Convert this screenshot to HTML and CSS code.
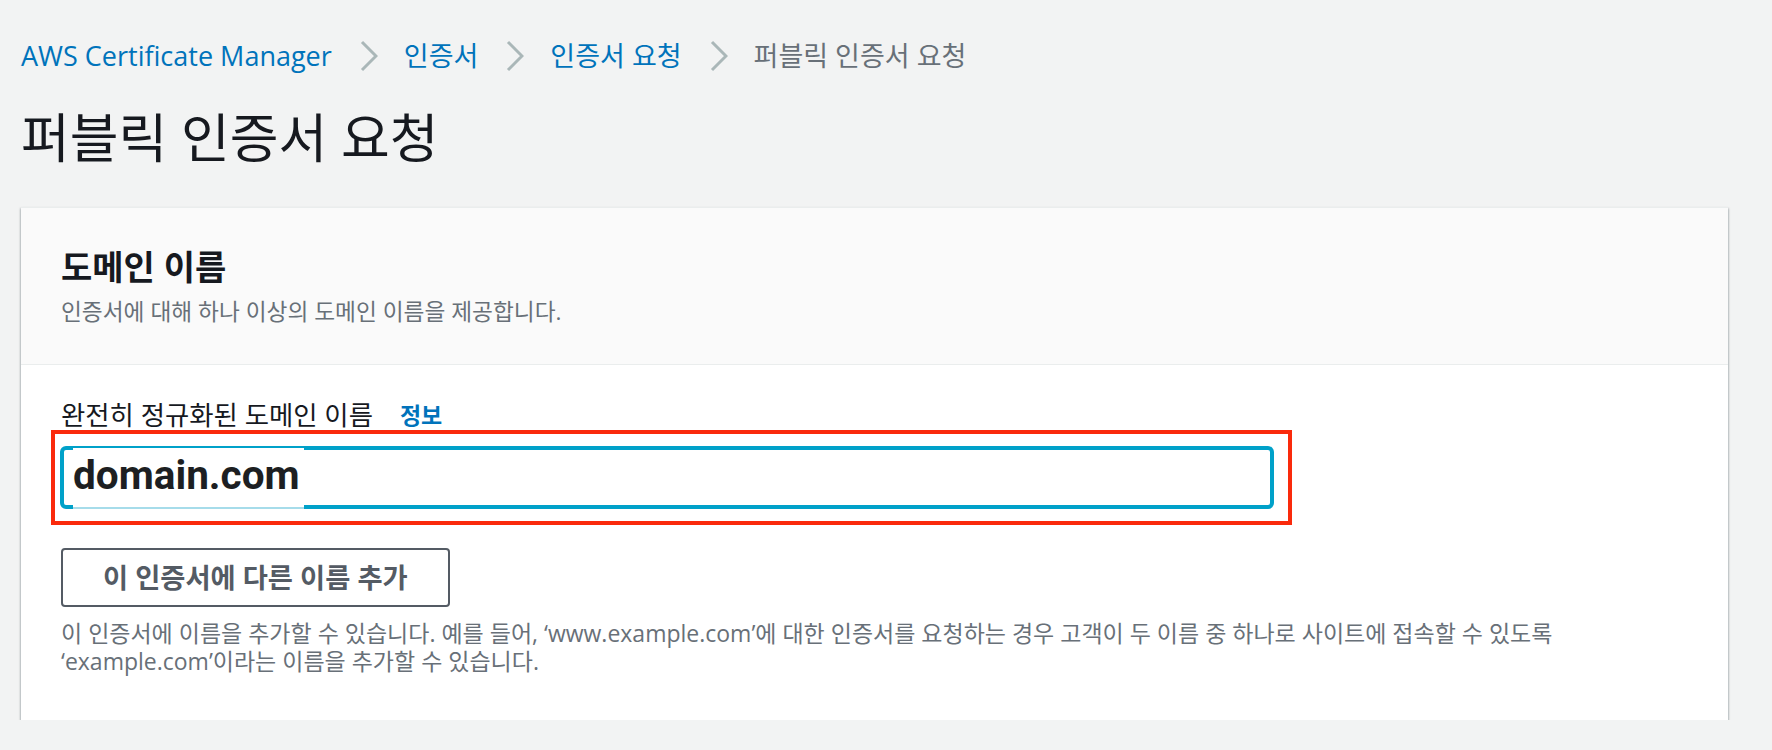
FILE: index.html
```html
<!DOCTYPE html>
<html lang="ko">
<head>
    <meta charset="UTF-8">
    <meta name="viewport" content="width=device-width, initial-scale=1.0">
    <title>퍼블릭 인증서 요청</title>
    <link rel="stylesheet" href="styles.css">
</head>
<body>
    <nav class="breadcrumbs">
        <a href="#" class="crumb" lang="en">AWS Certificate Manager</a>
        <svg class="chevron" viewBox="0 0 18 32"><polyline points="2,2 16,16 2,30"/></svg>
        <a href="#" class="crumb">인증서</a>
        <svg class="chevron" viewBox="0 0 18 32"><polyline points="2,2 16,16 2,30"/></svg>
        <a href="#" class="crumb">인증서 요청</a>
        <svg class="chevron" viewBox="0 0 18 32"><polyline points="2,2 16,16 2,30"/></svg>
        <span class="crumb current">퍼블릭 인증서 요청</span>
    </nav>

    <h1 class="page-title">퍼블릭 인증서 요청</h1>

    <div class="container">
        <div class="container-header">
            <h2>도메인 이름</h2>
            <p class="description">인증서에 대해 하나 이상의 도메인 이름을 제공합니다.</p>
        </div>
        <div class="container-body">
            <div class="field-label">
                <label for="domain">완전히 정규화된 도메인 이름</label>
                <a href="#" class="info-link">정보</a>
            </div>
            <div class="highlight">
                <div class="input">
                    <span class="input-value" id="domain">domain.com</span>
                </div>
            </div>
            <button class="btn" type="button">이 인증서에 다른 이름 추가</button>
            <p class="hint">이 인증서에 이름을 추가할 수 있습니다. 예를 들어, ‘www.example.com’에 대한 인증서를 요청하는 경우 고객이 두 이름 중 하나로 사이트에 접속할 수 있도록 ‘example.com’이라는 이름을 추가할 수 있습니다.</p>
        </div>
    </div>
</body>
</html>
```

FILE: styles.css
```css
body {
    font-family: "Open Sans", "Noto Sans CJK KR", sans-serif;
    background: #f2f3f3;
    color: #16191f;
    margin: 0;
    padding: 0 44px 0 21px;
}

.breadcrumbs {
    display: flex;
    align-items: center;
    height: 40px;
    padding-top: 36px;
    font-size: 27px;
    line-height: 40px;
}

.crumb {
    color: #0073bb;
    text-decoration: none;
}

.crumb.current {
    color: #687078;
}

.chevron {
    width: 18px;
    height: 32px;
    margin: 0 26px 0 28px;
    fill: none;
    stroke: #aab7b8;
    stroke-width: 3;
}

.page-title {
    margin: 34px 0 41px;
    font-size: 53px;
    line-height: 56px;
    font-weight: 400;
}

.container {
    background: #fff;
    border-top: 1px solid #eaeded;
    box-shadow: 0 2px 2px rgba(0, 28, 36, 0.3), 1px 1px 2px rgba(0, 28, 36, 0.15), -1px 1px 2px rgba(0, 28, 36, 0.15);
}

.container-header {
    background: #fafafa;
    border-bottom: 1px solid #eaeded;
    padding: 39px 40px 37px;
}

.container-header h2 {
    margin: 0;
    font-size: 34px;
    line-height: 40px;
    font-weight: 700;
}

.description {
    margin: 10px 0 0;
    font-size: 22.7px;
    line-height: 30px;
    color: #687078;
}

.container-body {
    padding: 36px 40px 45px;
}

.field-label {
    display: flex;
    align-items: center;
    font-size: 26.4px;
    line-height: 29px;
}

.info-link {
    margin-left: 27px;
    font-size: 23px;
    font-weight: 700;
    color: #0073bb;
    text-decoration: none;
}

.highlight {
    width: 1241px;
    margin-left: -10px;
    box-sizing: border-box;
    border: 4px solid #fa2a0c;
    padding: 12px 14px 12px 5px;
}

.input {
    display: flex;
    height: 63px;
    box-sizing: border-box;
    border: 4px solid #00a1c9;
    border-radius: 6px;
    padding-left: 9px;
    background: #fff;
}

.input-value {
    margin: -2px 0 -4px;
    padding: 0 4px 5px 0;
    border-bottom: 2px solid #a6dcea;
    background: #fff;
    font-family: Roboto, sans-serif;
    font-size: 40.5px;
    font-weight: 700;
    line-height: 54px;
    color: #1d1f22;
}

.btn {
    display: block;
    margin-top: 23px;
    height: 59px;
    padding: 0 40px;
    border: 2px solid #545b64;
    border-radius: 4px;
    background: #fff;
    color: #545b64;
    font-family: inherit;
    font-size: 27.3px;
    font-weight: 700;
    line-height: 55px;
}

.hint {
    margin: 12px 0 0;
    font-size: 23px;
    line-height: 28px;
    color: #687078;
    word-break: keep-all;
}
```
